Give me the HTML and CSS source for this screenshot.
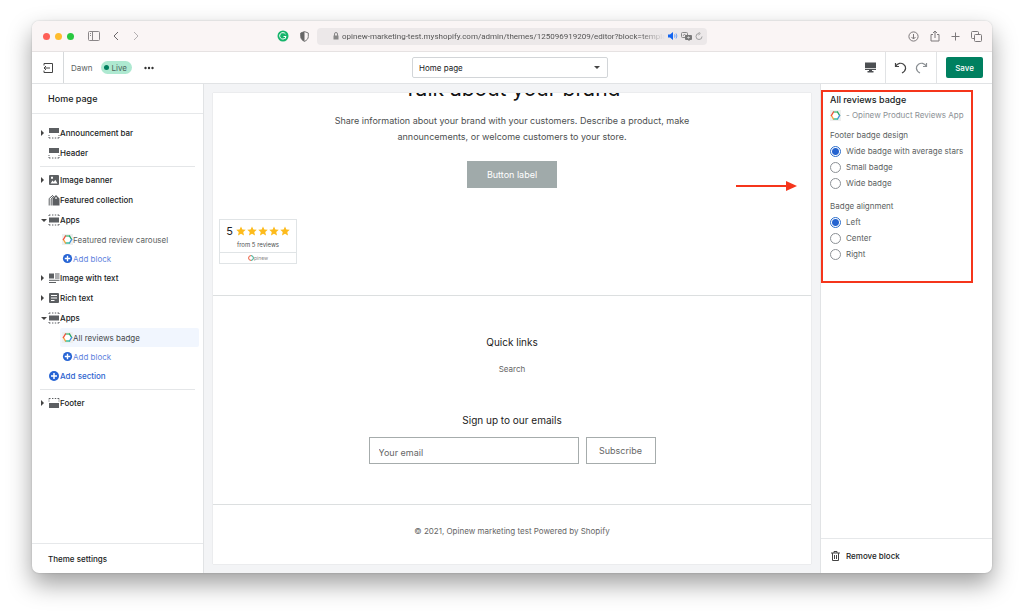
FILE: index.html
```html
<!DOCTYPE html>
<html lang="en">
<head>
    <meta charset="UTF-8">
    <meta name="viewport" content="width=device-width, initial-scale=1.0">
    <title>Theme editor</title>
    <link rel="stylesheet" href="styles.css">
</head>
<body>
    <!-- shared icons -->
    <svg class="sprite" aria-hidden="true">
        <symbol id="i-header" viewBox="0 0 12 12"><path d="M1 1h10v5H1z" fill="currentColor"/><path d="M1 8v1M1 10v1h1.500M4 11h1.400M6.800 11h1.400M9.500 11H11v-1M11 9V8" fill="none" stroke="currentColor"/></symbol>
        <symbol id="i-footer" viewBox="0 0 12 12"><path d="M1 6h10v5H1z" fill="currentColor"/><path d="M1 4.500v-1M1 2.500v-1h1.500M4 1.500h1.400M6.800 1.500h1.400M9.500 1.500H11v1M11 3.500v1" fill="none" stroke="currentColor"/></symbol>
        <symbol id="i-apps" viewBox="0 0 12 12"><path d="M1 3.500h10v5H1z" fill="currentColor"/><path d="M1 2V1h1.500M4 1h1.400M6.800 1h1.400M9.500 1H11v1M1 10v1h1.500M4 11h1.400M6.800 11h1.400M9.500 11H11v-1" fill="none" stroke="currentColor"/></symbol>
        <symbol id="i-image" viewBox="0 0 12 12"><path fill="currentColor" fill-rule="evenodd" d="M2 1h8a1 1 0 0 1 1 1v8a1 1 0 0 1-1 1H2a1 1 0 0 1-1-1V2a1 1 0 0 1 1-1zM2.500 9.500h7L7.300 5.800 5.800 8 4.600 6.600zM3 2.800v1.900h2V2.800z"/></symbol>
        <symbol id="i-tag" viewBox="0 0 12 12"><path fill="currentColor" fill-rule="evenodd" d="M4.500 4.500 8 1l3.500 3.500v7h-7zM8 3.200a.8.8 0 1 0 .01 0z"/><path d="M1.200 11.500v-7L5 1.200M3.200 11.500V5L6 2" fill="none" stroke="currentColor"/></symbol>
        <symbol id="i-imgtext" viewBox="0 0 12 12"><path d="M1 1.500h5v5H1z" fill="currentColor"/><path d="M7 2h4.500M7 4h4.500M7 6h4.500M1 8.300h10.500M1 10.500h7" stroke="currentColor"/></symbol>
        <symbol id="i-rich" viewBox="0 0 12 12"><rect x="1" y="1" width="10" height="10" rx="1" fill="currentColor"/><path d="M3 3.500h6M3 6h6M3 8.500h3.500" stroke="#fff"/></symbol>
        <symbol id="i-add" viewBox="0 0 12 12"><circle cx="6" cy="6" r="5" fill="#2563d4"/><path d="M6 3v6M3 6h6" stroke="#fff" stroke-width="1.500"/></symbol>
        <symbol id="i-opinew" viewBox="0 0 12 12"><path d="M0 0h12v12H0z" fill="#efefef"/><path d="M3.800 2.200h4.400L10.500 6 8.200 9.800H3.800L1.500 6z" fill="#fff"/><g fill="none" stroke-width="1.500" stroke-linecap="round"><path d="M3.800 2.200h4.400" stroke="#5fc08a"/><path d="M8.200 2.200 10.500 6" stroke="#23a566"/><path d="M10.500 6 8.200 9.800" stroke="#3f8fe0"/><path d="M8.200 9.800H3.800" stroke="#3fc0a0"/><path d="M3.800 9.800 1.500 6" stroke="#f5a23a"/><path d="M1.500 6l2.300-3.800" stroke="#f2503a"/></g></symbol>
        <symbol id="i-star" viewBox="0 0 12 12"><path d="M6 .5 7.700 4.200l4 .4-3 2.700.9 4L6 9.200l-3.600 2.100.9-4-3-2.700 4-.4z" fill="#fdbb1c"/></symbol>
    </svg>

    <div class="window">
        <!-- browser toolbar -->
        <header class="browser">
            <div class="browser-side">
                <span class="dot red"></span>
                <span class="dot yellow"></span>
                <span class="dot green"></span>
                <button class="icon-btn tabs" aria-label="Show sidebar"><svg width="12" height="10" viewBox="0 0 12 10" fill="none" stroke="#8a8688"><rect x=".5" y=".5" width="11" height="9" rx="1"/><path d="M4.500.5v9M2 2.500h1M2 4.500h1"/></svg></button>
                <button class="icon-btn" aria-label="Back"><svg width="8" height="10" viewBox="0 0 8 10" fill="none" stroke="#6b6769"><path d="M6 1 2 5l4 4"/></svg></button>
                <button class="icon-btn forward" aria-label="Forward"><svg width="8" height="10" viewBox="0 0 8 10" fill="none" stroke="#b4b0b2"><path d="m2 1 4 4-4 4"/></svg></button>
                <button class="icon-btn push" aria-label="Grammar check"><svg width="12" height="12" viewBox="0 0 12 12"><circle cx="6" cy="6" r="5.500" fill="#15b46b"/><path d="M8.500 4A3.200 3.200 0 1 0 9 6.500H6.500M8.500 8.500v-2" fill="none" stroke="#fff"/></svg></button>
                <button class="icon-btn shield" aria-label="Privacy report"><svg width="9" height="11" viewBox="0 0 9 11"><path d="M4.500.6 8.300 2v3.500c0 2.300-1.500 3.800-3.800 4.900C2.200 9.300.7 7.800.7 5.500V2z" fill="none" stroke="#777"/><path d="M4.500.6v9.800C2.200 9.300.7 7.800.7 5.500V2z" fill="#666"/></svg></button>
            </div>
            <div class="address">
                <svg width="6" height="8" viewBox="0 0 6 8"><path d="M.5 3.500h5v4h-5z" fill="#888"/><path d="M1.500 4V2a1.500 1.500 0 0 1 3 0v2" fill="none" stroke="#888"/></svg>
                <input class="url" type="text" aria-label="Address" value="opinew-marketing-test.myshopify.com/admin/themes/125096919209/editor?block=template">
                <svg width="10" height="8" viewBox="0 0 10 8"><path d="M0 2.500h2L5 0v8L2 5.500H0z" fill="#1264f0"/><path d="M6.500 2.500q1 1.500 0 3M8 1.500q1.800 2.500 0 5" fill="none" stroke="#6fa1f5"/></svg>
                <svg width="11" height="9" viewBox="0 0 11 9"><rect x=".5" y=".5" width="6" height="5" rx="1" fill="none" stroke="#888"/><path d="M2 4l1.500-2L5 4" fill="none" stroke="#777" stroke-width=".7"/><path d="M5 3h5a1 1 0 0 1 1 1v3a1 1 0 0 1-1 1H9L8 9 7 8H5a1 1 0 0 1-1-1V4a1 1 0 0 1 1-1z" fill="#777"/><path d="M6 5.500h3M7.500 4.300v2.500" stroke="#ddd" stroke-width=".7"/></svg>
                <svg width="8" height="9" viewBox="0 0 8 9" fill="none" stroke="#999"><path d="M4 1.500a3 3 0 1 0 3 3M3.500 0l1.800 1.500L3.500 3" stroke-width=".9"/></svg>
            </div>
            <div class="browser-side right">
                <button class="icon-btn" aria-label="Downloads"><svg width="11" height="11" viewBox="0 0 11 11" fill="none" stroke="#7d797b"><circle cx="5.500" cy="5.500" r="4.600"/><path d="M5.500 3v5M3.500 6l2 2 2-2"/></svg></button>
                <button class="icon-btn" aria-label="Share"><svg width="10" height="12" viewBox="0 0 10 12" fill="none" stroke="#7d797b"><path d="M3 4.500H1v6.500h8V4.500H7M5 8V1M3 3l2-2 2 2"/></svg></button>
                <button class="icon-btn" aria-label="New tab"><svg width="9" height="9" viewBox="0 0 9 9" stroke="#7d797b"><path d="M4.500.5v8M.5 4.500h8"/></svg></button>
                <button class="icon-btn" aria-label="Tab overview"><svg width="11" height="11" viewBox="0 0 11 11" fill="none" stroke="#7d797b"><rect x="3.500" y="3.500" width="7" height="7" rx="1"/><path d="M3.500 7.500h-2a1 1 0 0 1-1-1v-5a1 1 0 0 1 1-1h5a1 1 0 0 1 1 1v2"/></svg></button>
            </div>
        </header>

        <!-- editor bar -->
        <div class="topbar">
            <div class="topbar-left">
                <button class="exit" aria-label="Exit editor"><svg width="10" height="10" viewBox="0 0 10 10" fill="none" stroke="#444"><path d="M1 2.500v-2h8.500v9H1v-2M7 5H1M3 3 1 5l2 2"/></svg></button>
                <span class="theme-name">Dawn</span>
                <span class="live">Live</span>
                <button class="icon-btn more" aria-label="More actions"><svg width="10" height="4" viewBox="0 0 10 4" fill="#333"><circle cx="1.500" cy="2" r="1.200"/><circle cx="5" cy="2" r="1.200"/><circle cx="8.500" cy="2" r="1.200"/></svg></button>
            </div>
            <div class="page-select">
                <select aria-label="Page">
                    <option>Home page</option>
                </select>
            </div>
            <div class="topbar-right">
                <button class="icon-btn device" aria-label="Desktop view"><svg width="11" height="11" viewBox="0 0 11 11" fill="#4c4f52"><path d="M0 .5h11v5.500H0zM0 6.700h11V8H0zM4 8h3v1h1.500v1.500h-6V9H4z"/></svg></button>
                <div class="history">
                    <button class="icon-btn" aria-label="Undo"><svg width="13" height="12" viewBox="0 0 13 12" fill="none" stroke="#444"><path d="M1.500 1v3.500H5M1.500 4.500C3.500 1 7 .5 9.500 2.200c2.800 2 3.300 6.300-1.500 8.800" stroke-width="1.200"/></svg></button>
                    <button class="icon-btn" aria-label="Redo"><svg width="13" height="12" viewBox="0 0 13 12" fill="none" stroke="#8a8f93"><path d="M11.500 1v3.500H8M11.500 4.500C9.500 1 6 .5 3.500 2.200.7 4.200.2 8.500 5 11" stroke-width="1.200"/></svg></button>
                </div>
                <button class="save">Save</button>
            </div>
        </div>

        <main class="editor">
            <!-- sections -->
            <nav class="sidebar">
                <h2>Home page</h2>
                <ul class="sections">
                    <li><button><i class="caret"></i><svg><use href="#i-header"/></svg>Announcement bar</button></li>
                    <li><button><i class="caret none"></i><svg><use href="#i-header"/></svg>Header</button></li>
                    <li class="divider"></li>
                    <li><button><i class="caret"></i><svg><use href="#i-image"/></svg>Image banner</button></li>
                    <li><button><i class="caret none"></i><svg><use href="#i-tag"/></svg>Featured collection</button></li>
                    <li><button><i class="caret open"></i><svg><use href="#i-apps"/></svg>Apps</button>
                        <ul class="blocks">
                            <li><button><svg><use href="#i-opinew"/></svg>Featured review carousel</button></li>
                            <li><button class="add"><svg><use href="#i-add"/></svg>Add block</button></li>
                        </ul>
                    </li>
                    <li><button><i class="caret"></i><svg><use href="#i-imgtext"/></svg>Image with text</button></li>
                    <li><button><i class="caret"></i><svg><use href="#i-rich"/></svg>Rich text</button></li>
                    <li><button><i class="caret open"></i><svg><use href="#i-apps"/></svg>Apps</button>
                        <ul class="blocks">
                            <li><button class="selected"><svg><use href="#i-opinew"/></svg>All reviews badge</button></li>
                            <li><button class="add"><svg><use href="#i-add"/></svg>Add block</button></li>
                        </ul>
                    </li>
                    <li><button class="add-section"><i class="caret none"></i><svg><use href="#i-add"/></svg>Add section</button></li>
                    <li class="divider"></li>
                    <li><button><i class="caret"></i><svg><use href="#i-footer"/></svg>Footer</button></li>
                </ul>
                <button class="settings">Theme settings</button>
            </nav>

            <!-- store preview -->
            <div class="canvas">
                <div class="page">
                    <section class="hero">
                        <h1>Talk about your brand</h1>
                        <p>Share information about your brand with your customers. Describe a product, make announcements, or welcome customers to your store.</p>
                        <button class="hero-btn">Button label</button>
                    </section>
                    <section class="reviews">
                        <div class="badge">
                            <div class="score">
                                <span>5</span>
                                <svg><use href="#i-star"/></svg><svg><use href="#i-star"/></svg><svg><use href="#i-star"/></svg><svg><use href="#i-star"/></svg><svg><use href="#i-star"/></svg>
                            </div>
                            <div class="count">from 5 reviews</div>
                            <div class="brand"><svg width="6" height="6" viewBox="0 0 6 6" fill="none"><path d="M3 .6A2.400 2.400 0 0 0 3 5.400" stroke="#ee5a3a"/><path d="M3 .6a2.400 2.400 0 0 1 0 4.800" stroke="#2fa58c"/></svg>pinew</div>
                        </div>
                    </section>
                    <section class="links">
                        <h3>Quick links</h3>
                        <a href="#">Search</a>
                        <h3>Sign up to our emails</h3>
                        <form class="signup">
                            <input type="email" placeholder="Your email" aria-label="Your email">
                            <button type="button">Subscribe</button>
                        </form>
                    </section>
                    <footer class="copyright">© 2021, Opinew marketing test Powered by Shopify</footer>
                </div>
                <svg class="arrow" width="61" height="12" viewBox="0 0 61 12"><path d="M0 6h52" stroke="#f5351b" stroke-width="2"/><path d="M50 1l11 5-11 5z" fill="#f5351b"/></svg>
            </div>

            <!-- block settings -->
            <aside class="panel">
                <div class="panel-body">
                    <h2>All reviews badge</h2>
                    <div class="app"><svg><use href="#i-opinew"/></svg>- Opinew Product Reviews App</div>
                    <fieldset>
                        <legend>Footer badge design</legend>
                        <label><input type="radio" name="design" checked>Wide badge with average stars</label>
                        <label><input type="radio" name="design">Small badge</label>
                        <label><input type="radio" name="design">Wide badge</label>
                    </fieldset>
                    <fieldset>
                        <legend>Badge alignment</legend>
                        <label><input type="radio" name="align" checked>Left</label>
                        <label><input type="radio" name="align">Center</label>
                        <label><input type="radio" name="align">Right</label>
                    </fieldset>
                    <div class="highlight"></div>
                </div>
                <button class="remove"><svg width="9" height="10" viewBox="0 0 9 10" fill="none" stroke="#444"><path d="M0 2h9M3 2V.5h3V2M1.500 2v7.500h6V2M3.500 4v4M5.500 4v4"/></svg>Remove block</button>
            </aside>
        </main>
    </div>
</body>
</html>
```
FILE: styles.css
```css
*{box-sizing: border-box;}
body{margin: 0;height: 100vh;padding: 21px 32px 42px;display: flex;background: #fff;font-family: Inter, "Liberation Sans", sans-serif;font-size: 8px;color: #202223;}
button,input,select{font: inherit;color: inherit;margin: 0;}
button{border: 0;padding: 0;background: none;}
h1,h2,h3,p,ul{margin: 0;padding: 0;}
ul{list-style: none;}
svg{flex: none;}
.sprite{position: absolute;width: 0;height: 0;}
.icon-btn{display: flex;}

.window{flex: 1;min-width: 0;display: flex;flex-direction: column;border-radius: 7px;overflow: hidden;background: #fff;box-shadow: 0 0 2px rgba(0,0,0,.2), 0 11px 24px rgba(0,0,0,.38);}

/* browser toolbar */
.browser{height: 31px;flex: none;display: grid;grid-template-columns: 1fr 390px 1fr;align-items: center;background: #faf5f5;border-bottom: 1px solid #e6e2e2;}
.browser-side{display: flex;align-items: center;padding-left: 11px;padding-right: 8px;}
.browser-side.right{justify-content: flex-end;gap: 11px;padding-right: 10px;}
.dot{width: 7px;height: 7px;border-radius: 50%;margin-right: 5px;}
.red{background: #fe5f57;}
.yellow{background: #febc2e;}
.green{background: #28c840;}
.tabs{margin: 0 12px 0 9px;}
.forward{margin-left: 12px;}
.push{margin-left: auto;}
.shield{margin-left: 11px;}
.address{height: 17px;display: flex;align-items: center;gap: 3px;padding: 0 4px 0 16px;border-radius: 4px;background: #ece8e9;}
.url{flex: 1;min-width: 0;border: 0;padding: 0;background: none;color: #555;font-family: Roboto, "Liberation Sans", sans-serif;mask-image: linear-gradient(90deg, #000 92%, transparent 100%);}

/* editor bar */
.topbar{height: 32px;flex: none;display: grid;grid-template-columns: 1fr 196px 1fr;align-items: center;padding-right: 4px;border-bottom: 1px solid #e1e3e5;}
.topbar-left,.topbar-right{display: flex;align-items: center;height: 100%;}
.topbar-right{justify-content: flex-end;padding-right: 5px;}
.exit{width: 32px;height: 100%;display: flex;align-items: center;justify-content: center;border-right: 1px solid #d6d9db;}
.theme-name{margin: 0 8px 0 7px;color: #5c5f62;}
.live{display: flex;align-items: center;gap: 3px;height: 13px;padding: 0 5px 0 3px;border-radius: 7px;background: #aee9d1;color: #4b655b;}
.live::before{content: "";width: 5px;height: 5px;border-radius: 50%;background: #007f5f;}
.more{margin-left: 12px;}
.page-select{position: relative;}
.page-select select{appearance: none;width: 100%;height: 21px;padding: 0 6px;border: 1px solid #d2d5d8;border-radius: 2px;background: #fff;}
.page-select::after{content: "";position: absolute;right: 8px;top: 9px;border: 3px solid transparent;border-top-color: #444;border-bottom: 0;}
.device{margin-right: 9px;}
.history{height: 100%;display: flex;align-items: center;gap: 8px;padding: 0 8px;margin-right: 9px;border: 1px solid #e1e3e5;border-width: 0 1px;}
.save{width: 37px;height: 21px;border-radius: 2px;background: #008060;color: #fff;font-weight: 500;}

/* columns */
.editor{flex: 1;min-height: 0;display: grid;grid-template-columns: 172px 1fr 172px;}
.sidebar{display: flex;flex-direction: column;border-right: 1px solid #e1e3e5;}
.sidebar h2{height: 30px;line-height: 30px;padding-left: 16px;border-bottom: 1px solid #e6e8ea;font-size: 9px;font-weight: 500;}
.sections{flex: 1;padding-top: 9px;}
.sections button{width: 100%;height: 20px;display: flex;align-items: center;padding-left: 9px;font-weight: 500;}
.sections svg{width: 12px;height: 12px;color: #5c5f62;}
.caret{width: 3px;margin-right: 4px;border: 3px solid transparent;border-left-color: #444;border-right: 0;}
.caret.open{width: 6px;margin-right: 1px;border: 3px solid transparent;border-top-color: #444;border-bottom: 0;}
.caret.none{border-color: transparent;}
.divider{height: 1px;margin: 3px 8px;background: #e4e6e8;}
.blocks{padding: 0 4px 0 28px;}
.blocks button{height: 19px;padding-left: 2px;border-radius: 2px;color: #5c5f62;font-weight: 400;}
.blocks svg{width: 11px;height: 11px;}
.blocks .selected{background: #f1f6fe;color: #45484b;}
.blocks .add{color: #5f83de;}
.sections .add-section{color: #2c63cf;}
.settings{height: 30px;padding-left: 16px;border-top: 1px solid #e6e8ea;text-align: left;font-weight: 500;}

/* store preview */
.canvas{position: relative;padding: 9px;display: flex;background: #f3f4f6;}
.page{flex: 1;overflow: hidden;display: flex;flex-direction: column;background: #fff;box-shadow: 0 0 1px rgba(0,0,0,.2);color: #4d4f50;}
.hero{margin-top: -14px;display: flex;flex-direction: column;align-items: center;text-align: center;}
.hero h1{font-size: 21px;line-height: 20px;font-weight: 400;color: #121212;}
.hero p{max-width: 400px;margin: 14px 0 16px;font-size: 9px;line-height: 16px;}
.hero-btn{height: 27px;padding: 0 20px;background: #a0aaaa;color: #fff;font-size: 9px;}
.reviews{padding: 31px 6px;border-bottom: 1px solid #dcdfe0;}
.badge{width: 78px;border: 1px solid #e0e4e6;text-align: center;}
.score{height: 20px;display: flex;align-items: center;justify-content: center;gap: 1px;padding-top: 2px;font-size: 11px;color: #222;}
.score span{margin-right: 2px;}
.score svg{width: 10px;height: 10px;}
.count{height: 12px;line-height: 10px;font-size: 6px;}
.brand{height: 11px;display: flex;align-items: center;justify-content: center;border-top: 1px solid #e0e4e6;font-size: 5px;color: #888;}
.links{display: flex;flex-direction: column;align-items: center;padding: 39px 20px 40px;border-bottom: 1px solid #dcdfe0;}
.links h3{font-size: 10px;line-height: 14px;font-weight: 400;color: #222;}
.links a{margin: 13px 0 37px;line-height: 14px;color: #666;text-decoration: none;}
.signup{display: flex;gap: 7px;margin-top: 10px;font-size: 9px;}
.signup input{width: 210px;height: 27px;padding: 3px 9px 0;border: 1px solid #a6acac;border-radius: 0;background: #fff;}
.signup input::placeholder{color: #666;}
.signup button{width: 70px;height: 27px;border: 1px solid #a6acac;color: #666;}
.copyright{padding: 20px 0;line-height: 12px;text-align: center;color: #666;}
.arrow{position: absolute;right: 23px;top: 96px;}

/* block settings */
.panel{display: flex;flex-direction: column;border-left: 1px solid #e1e3e5;}
.panel-body{flex: 1;position: relative;padding: 8px 9px;color: #5c5f62;}
.panel h2{font-size: 9px;line-height: 15px;font-weight: 500;color: #202223;}
.app{display: flex;align-items: center;gap: 5px;height: 16px;color: #8c9196;}
.app svg{width: 11px;height: 11px;}
fieldset{min-width: 0;margin: 4px 0 7px;padding: 0;border: 0;}
legend{padding: 0;line-height: 16px;}
fieldset label{display: flex;align-items: center;gap: 5px;height: 16px;white-space: nowrap;}
fieldset input{appearance: none;width: 11px;height: 11px;border: 1px solid #8c9196;border-radius: 50%;background: #fff;}
fieldset input:checked{border-color: #2c6ecb;background: radial-gradient(circle, #2463d0 3px, #fff 4px);}
.highlight{position: absolute;left: 0;right: 19px;top: 6px;height: 193px;border: 2px solid #f5351b;}
.remove{height: 35px;display: flex;align-items: center;gap: 6px;padding-left: 10px;border-top: 1px solid #e6e8ea;font-weight: 500;}
```
